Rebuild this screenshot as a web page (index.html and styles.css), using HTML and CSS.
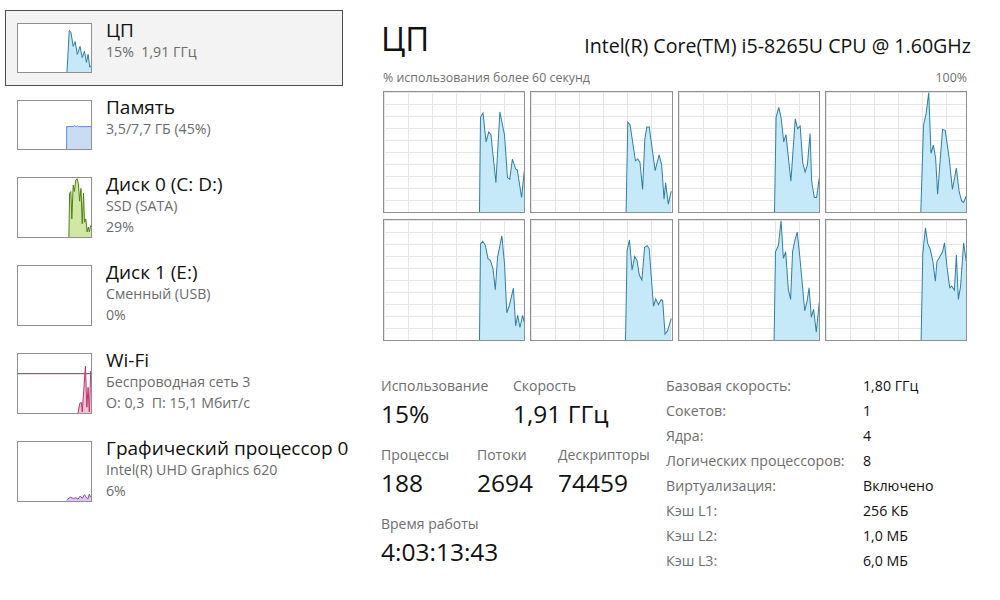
FILE: index.html
```html
<!DOCTYPE html>
<html lang="ru">
<head>
<meta charset="utf-8">
<title>ЦП</title>
<link rel="stylesheet" href="styles.css">
</head>
<body>
<div class="app">
  <nav class="side">
    <div class="item selected">
      <div class="thumb">
        <svg viewBox="0 0 75 50" preserveAspectRatio="none">
          <polygon class="cpu-fill" points="50.3,50 52.7,6.7 54.3,8.3 56.7,23.3 58.7,18.3 61,31.7 63.7,23.3 66,35 68.3,28.3 70.3,40 72,31.7 73.7,45 75,43.3 75,50"/>
          <polyline class="cpu-line" points="50.3,50 52.7,6.7 54.3,8.3 56.7,23.3 58.7,18.3 61,31.7 63.7,23.3 66,35 68.3,28.3 70.3,40 72,31.7 73.7,45 75,43.3"/>
        </svg>
      </div>
      <div class="info">
        <div class="name">ЦП</div>
        <div class="sub">15%&nbsp; 1,91 ГГц</div>
      </div>
    </div>
    <div class="item">
      <div class="thumb">
        <svg viewBox="0 0 75 50" preserveAspectRatio="none">
          <polygon class="mem-fill" points="50,50 50,26.7 57,26.7 58,25.3 59,26.7 61,26 62,26.7 75,26.7 75,50"/>
          <polyline class="mem-line" points="50,50 50,26.7 57,26.7 58,25.3 59,26.7 61,26 62,26.7 75,26.7"/>
        </svg>
      </div>
      <div class="info">
        <div class="name">Память</div>
        <div class="sub">3,5/7,7 ГБ (45%)</div>
      </div>
    </div>
    <div class="item">
      <div class="thumb tall">
        <svg viewBox="0 0 75 61" preserveAspectRatio="none">
          <polygon class="disk-fill" points="52.3,61 53,15.7 54.3,14 55.3,42.3 56.7,7.3 58,14 59.3,2.3 60.7,0.7 62,5.7 63.3,24 64.7,10.7 66,47.3 67.3,15.7 68.3,45.7 69.7,42.3 71,55.7 72.3,50.7 73.3,55.7 74.7,49 75,61"/>
          <polyline class="disk-line" points="52.3,61 53,15.7 54.3,14 55.3,42.3 56.7,7.3 58,14 59.3,2.3 60.7,0.7 62,5.7 63.3,24 64.7,10.7 66,47.3 67.3,15.7 68.3,45.7 69.7,42.3 71,55.7 72.3,50.7 73.3,55.7 74.7,49"/>
        </svg>
      </div>
      <div class="info">
        <div class="name">Диск 0 (C: D:)</div>
        <div class="sub">SSD (SATA)</div>
        <div class="sub">29%</div>
      </div>
    </div>
    <div class="item">
      <div class="thumb tall"></div>
      <div class="info">
        <div class="name">Диск 1 (E:)</div>
        <div class="sub">Сменный (USB)</div>
        <div class="sub">0%</div>
      </div>
    </div>
    <div class="item">
      <div class="thumb tall">
        <svg viewBox="0 0 75 60" preserveAspectRatio="none">
          <line class="wifi-max" x1="0" y1="20" x2="75" y2="20"/>
          <polygon class="wifi-fill" points="61.7,60 63.3,50.7 65,49 66,59 67.3,40.7 69.3,12.3 70.7,54 72,34 73.3,59 74.7,17.3 75,60"/>
          <polyline class="wifi-line" points="61.7,60 63.3,50.7 65,49 66,59 67.3,40.7 69.3,12.3 70.7,54 72,34 73.3,59 74.7,17.3"/>
        </svg>
      </div>
      <div class="info">
        <div class="name">Wi-Fi</div>
        <div class="sub">Беспроводная сеть 3</div>
        <div class="sub">О: 0,3&nbsp; П: 15,1 Мбит/с</div>
      </div>
    </div>
    <div class="item">
      <div class="thumb tall">
        <svg viewBox="0 0 75 62" preserveAspectRatio="none">
          <polygon class="gpu-fill" points="50,60.7 54,58 56.7,59.3 59.3,58.7 61.7,60 64,56.7 66,59.3 68.3,55.3 70,58 71.7,60 73.3,54.7 74.7,58 75,62 50,62"/>
          <polyline class="gpu-line" points="50,60.7 54,58 56.7,59.3 59.3,58.7 61.7,60 64,56.7 66,59.3 68.3,55.3 70,58 71.7,60 73.3,54.7 74.7,58"/>
        </svg>
      </div>
      <div class="info">
        <div class="name">Графический процессор 0</div>
        <div class="sub">Intel(R) UHD Graphics 620</div>
        <div class="sub">6%</div>
      </div>
    </div>
  </nav>

  <main class="main">
    <header class="head">
      <h1 class="title">ЦП</h1>
      <div class="model">Intel(R) Core(TM) i5-8265U CPU @ 1.60GHz</div>
    </header>
    <div class="axis">
      <span>% использования более 60 секунд</span>
      <span>100%</span>
    </div>
    <div class="cores">
      <div class="core"><svg viewBox="0 0 142 122" preserveAspectRatio="none"><polygon class="cpu-fill" points="96.7,122 97.7,25.7 100.3,21.3 103.3,50.7 106,40.7 108.3,43.3 113.3,92.3 117.3,20.3 122,43.7 125,87 127.3,88.7 130,68.3 133.3,78.3 135,79.3 139.3,107.3 142,80.7 142,122"/><polyline class="cpu-line" points="96.7,122 97.7,25.7 100.3,21.3 103.3,50.7 106,40.7 108.3,43.3 113.3,92.3 117.3,20.3 122,43.7 125,87 127.3,88.7 130,68.3 133.3,78.3 135,79.3 139.3,107.3 142,80.7"/></svg></div>
      <div class="core"><svg viewBox="0 0 142 122" preserveAspectRatio="none"><polygon class="cpu-fill" points="96.3,122 98,30.7 100.3,33.3 105.7,70 108,68 110.3,71.3 113,99 115.3,47.3 117.3,35.7 119.7,35.7 125.7,80 129.7,64 132.3,74 134.7,109 136.3,92.3 139,114 142,100.7 142,122"/><polyline class="cpu-line" points="96.3,122 98,30.7 100.3,33.3 105.7,70 108,68 110.3,71.3 113,99 115.3,47.3 117.3,35.7 119.7,35.7 125.7,80 129.7,64 132.3,74 134.7,109 136.3,92.3 139,114 142,100.7"/></svg></div>
      <div class="core"><svg viewBox="0 0 142 122" preserveAspectRatio="none"><polygon class="cpu-fill" points="96.7,122 98.3,25.7 101,15.7 103.3,25.7 106,50.7 108.3,43.3 113.3,90.7 117.7,27.3 120,37.3 122.7,34.7 125.3,72.3 127.7,81.3 130,74 132.7,42.3 134.3,90.7 137,107.3 139.3,107.3 142,87.3 142,122"/><polyline class="cpu-line" points="96.7,122 98.3,25.7 101,15.7 103.3,25.7 106,50.7 108.3,43.3 113.3,90.7 117.7,27.3 120,37.3 122.7,34.7 125.3,72.3 127.7,81.3 130,74 132.7,42.3 134.3,90.7 137,107.3 139.3,107.3 142,87.3"/></svg></div>
      <div class="core"><svg viewBox="0 0 142 122" preserveAspectRatio="none"><polygon class="cpu-fill" points="96,122 98.7,34 101.3,22.3 104,0.5 106.3,62.3 108.7,54 111,67.3 113,104 118,38 120.7,39 124.7,67.3 128,99 132,77.3 134.7,100.7 137.3,110.7 139.3,112.3 142,105.7 142,122"/><polyline class="cpu-line" points="96,122 98.7,34 101.3,22.3 104,0.5 106.3,62.3 108.7,54 111,67.3 113,104 118,38 120.7,39 124.7,67.3 128,99 132,77.3 134.7,100.7 137.3,110.7 139.3,112.3 142,105.7"/></svg></div>
      <div class="core"><svg viewBox="0 0 142 122" preserveAspectRatio="none"><polygon class="cpu-fill" points="96.7,122 97.7,24.3 100,21.7 102.7,26 105.3,39.3 107.7,41 110.3,49.3 112.7,71 115,37.7 119.3,16 122,44.3 124.3,94.3 126.7,87.7 131,69.3 133.3,107.7 135.3,97 137.7,109.3 140.3,97 142,104 142,122"/><polyline class="cpu-line" points="96.7,122 97.7,24.3 100,21.7 102.7,26 105.3,39.3 107.7,41 110.3,49.3 112.7,71 115,37.7 119.3,16 122,44.3 124.3,94.3 126.7,87.7 131,69.3 133.3,107.7 135.3,97 137.7,109.3 140.3,97 142,104"/></svg></div>
      <div class="core"><svg viewBox="0 0 142 122" preserveAspectRatio="none"><polygon class="cpu-fill" points="95.7,122 97.3,31 99.7,20.3 102.3,51 105,37 107.3,41 109.7,56 112.3,61 115,27.7 117.7,26 119.7,29.3 124,87.7 126.3,80.3 129,86 131.7,81 133.3,81.7 135.7,116 138.3,112.7 142,100 142,122"/><polyline class="cpu-line" points="95.7,122 97.3,31 99.7,20.3 102.3,51 105,37 107.3,41 109.7,56 112.3,61 115,27.7 117.7,26 119.7,29.3 124,87.7 126.3,80.3 129,86 131.7,81 133.3,81.7 135.7,116 138.3,112.7 142,100"/></svg></div>
      <div class="core"><svg viewBox="0 0 142 122" preserveAspectRatio="none"><polygon class="cpu-fill" points="96.3,122 97.7,32.3 100.7,25.7 103.3,0.7 105.7,39 108,32.3 110.7,70.7 113,80.7 115,32.3 117.3,20.7 119.7,12.3 122.3,37.3 127.3,92.3 129.7,82.3 131.7,69 134,99 136.3,90.7 139,114 142,84 142,122"/><polyline class="cpu-line" points="96.3,122 97.7,32.3 100.7,25.7 103.3,0.7 105.7,39 108,32.3 110.7,70.7 113,80.7 115,32.3 117.3,20.7 119.7,12.3 122.3,37.3 127.3,92.3 129.7,82.3 131.7,69 134,99 136.3,90.7 139,114 142,84"/></svg></div>
      <div class="core"><svg viewBox="0 0 142 122" preserveAspectRatio="none"><polygon class="cpu-fill" points="96.3,122 98,34 100.7,8 103,24 105.3,29 108,40.7 110.7,62.3 112.3,42.3 115.3,37.3 118,32.3 120,23.3 123,52.3 125.3,69 127.3,67.3 130,71.3 132,35.7 134,80.7 136.3,67.3 139.3,23.3 142,42 142,122"/><polyline class="cpu-line" points="96.3,122 98,34 100.7,8 103,24 105.3,29 108,40.7 110.7,62.3 112.3,42.3 115.3,37.3 118,32.3 120,23.3 123,52.3 125.3,69 127.3,67.3 130,71.3 132,35.7 134,80.7 136.3,67.3 139.3,23.3 142,42"/></svg></div>
    </div>

    <section class="stats">
      <div class="dyn">
        <div class="row">
          <div class="stat w132"><div class="label">Использование</div><div class="value">15%</div></div>
          <div class="stat"><div class="label">Скорость</div><div class="value">1,91 ГГц</div></div>
        </div>
        <div class="row">
          <div class="stat w96"><div class="label">Процессы</div><div class="value">188</div></div>
          <div class="stat w81"><div class="label">Потоки</div><div class="value">2694</div></div>
          <div class="stat"><div class="label">Дескрипторы</div><div class="value">74459</div></div>
        </div>
        <div class="row">
          <div class="stat"><div class="label">Время работы</div><div class="value">4:03:13:43</div></div>
        </div>
      </div>
      <dl class="spec">
        <dt>Базовая скорость:</dt><dd>1,80 ГГц</dd>
        <dt>Сокетов:</dt><dd>1</dd>
        <dt>Ядра:</dt><dd>4</dd>
        <dt>Логических процессоров:</dt><dd>8</dd>
        <dt>Виртуализация:</dt><dd>Включено</dd>
        <dt>Кэш L1:</dt><dd>256 КБ</dd>
        <dt>Кэш L2:</dt><dd>1,0 МБ</dd>
        <dt>Кэш L3:</dt><dd>6,0 МБ</dd>
      </dl>
    </section>
  </main>
</div>
</body>
</html>
```

FILE: styles.css
```css
* { box-sizing: border-box; }
html, body { margin: 0; padding: 0; background: #fff; }
body {
  font-family: "Open Sans", "Noto Sans", sans-serif;
  color: #1a1a1a;
  width: 1000px;
  height: 600px;
  overflow: hidden;
}
.app { display: flex; align-items: flex-start; }

/* sidebar */
.side { width: 343px; padding: 10px 0 0 5px; display: flex; flex-direction: column; gap: 1px; }
.item {
  display: flex;
  align-items: flex-start;
  padding: 12px 11px;
  border: 1px solid transparent;
}
.item.selected { background: #f3f3f3; border-color: #4d4d4d; }
.thumb {
  width: 75px; height: 50px; flex: none;
  border: 1px solid #8f8f8f;
  background: #fff;
  overflow: hidden;
}
.thumb.tall { height: 61px; }
.thumb svg, .core svg { display: block; width: 100%; height: 100%; }
.info { margin: -3px 0 0 14px; white-space: nowrap; }
.name { font-size: 19px; line-height: 21px; color: #111; }
.sub { font-size: 14.2px; line-height: 21px; color: #6b6b6b; }

.cpu-fill { fill: #c5e9f8; }
.cpu-line { fill: none; stroke: #2f7fa3; stroke-width: 1; vector-effect: non-scaling-stroke; }
.mem-fill { fill: #c9dcf4; }
.mem-line { fill: none; stroke: #5b8ccf; stroke-width: 1; vector-effect: non-scaling-stroke; }
.disk-fill { fill: #cfe8a6; }
.disk-line { fill: none; stroke: #4f7f12; stroke-width: 1; vector-effect: non-scaling-stroke; }
.wifi-fill { fill: #f4c3d6; }
.wifi-line { fill: none; stroke: #bd336f; stroke-width: 1; vector-effect: non-scaling-stroke; }
.wifi-max { stroke: #9a2d5c; stroke-width: 1; vector-effect: non-scaling-stroke; }
.gpu-fill { fill: #dccaee; }
.gpu-line { fill: none; stroke: #8a4db8; stroke-width: 1; vector-effect: non-scaling-stroke; }

/* main */
.main { width: 590px; margin-left: 38px; padding-top: 19px; }
.head { display: flex; justify-content: space-between; align-items: flex-start; height: 40px; }
.title { margin: 0; font-size: 33px; line-height: 40px; font-weight: 400; color: #111; }
.model { margin-top: 15px; font-size: 19.6px; line-height: 24px; color: #111; white-space: nowrap; }
.axis {
  display: flex; justify-content: space-between;
  margin: 11px 2px 0 2px; width: 584px;
  font-size: 12.4px; line-height: 16px; color: #6f6f6f;
}
.cores {
  margin: 5px 0 0 2px;
  width: 584px;
  display: grid;
  grid-template-columns: repeat(4, 1fr);
  grid-auto-rows: 122px;
  column-gap: 5px;
  row-gap: 6px;
}
.core {
  border: 1px solid #8f8f8f;
  background-color: #fff;
  background-image:
    linear-gradient(to right, #e6e6e6 1px, transparent 1px),
    linear-gradient(to bottom, #e6e6e6 1px, transparent 1px);
  background-size: 24px 12px;
  overflow: hidden;
}

.stats { display: flex; margin-top: 33px; }
.dyn { width: 285px; padding-top: 2px; display: flex; flex-direction: column; gap: 15px; }
.row { display: flex; }
.stat { white-space: nowrap; }
.w132 { width: 132px; }
.w96 { width: 96px; }
.w81 { width: 81px; }
.label { font-size: 14px; line-height: 20px; color: #6e6e6e; }
.value { margin-top: 2px; font-size: 24.5px; line-height: 32px; color: #111; }

.spec {
  margin: -1px 0 0 0;
  display: grid;
  grid-template-columns: 197px auto;
  grid-auto-rows: 25px;
  font-size: 14.2px; line-height: 25px;
  white-space: nowrap;
}
.spec dt { color: #6e6e6e; }
.spec dd { margin: 0; color: #111; }
```
